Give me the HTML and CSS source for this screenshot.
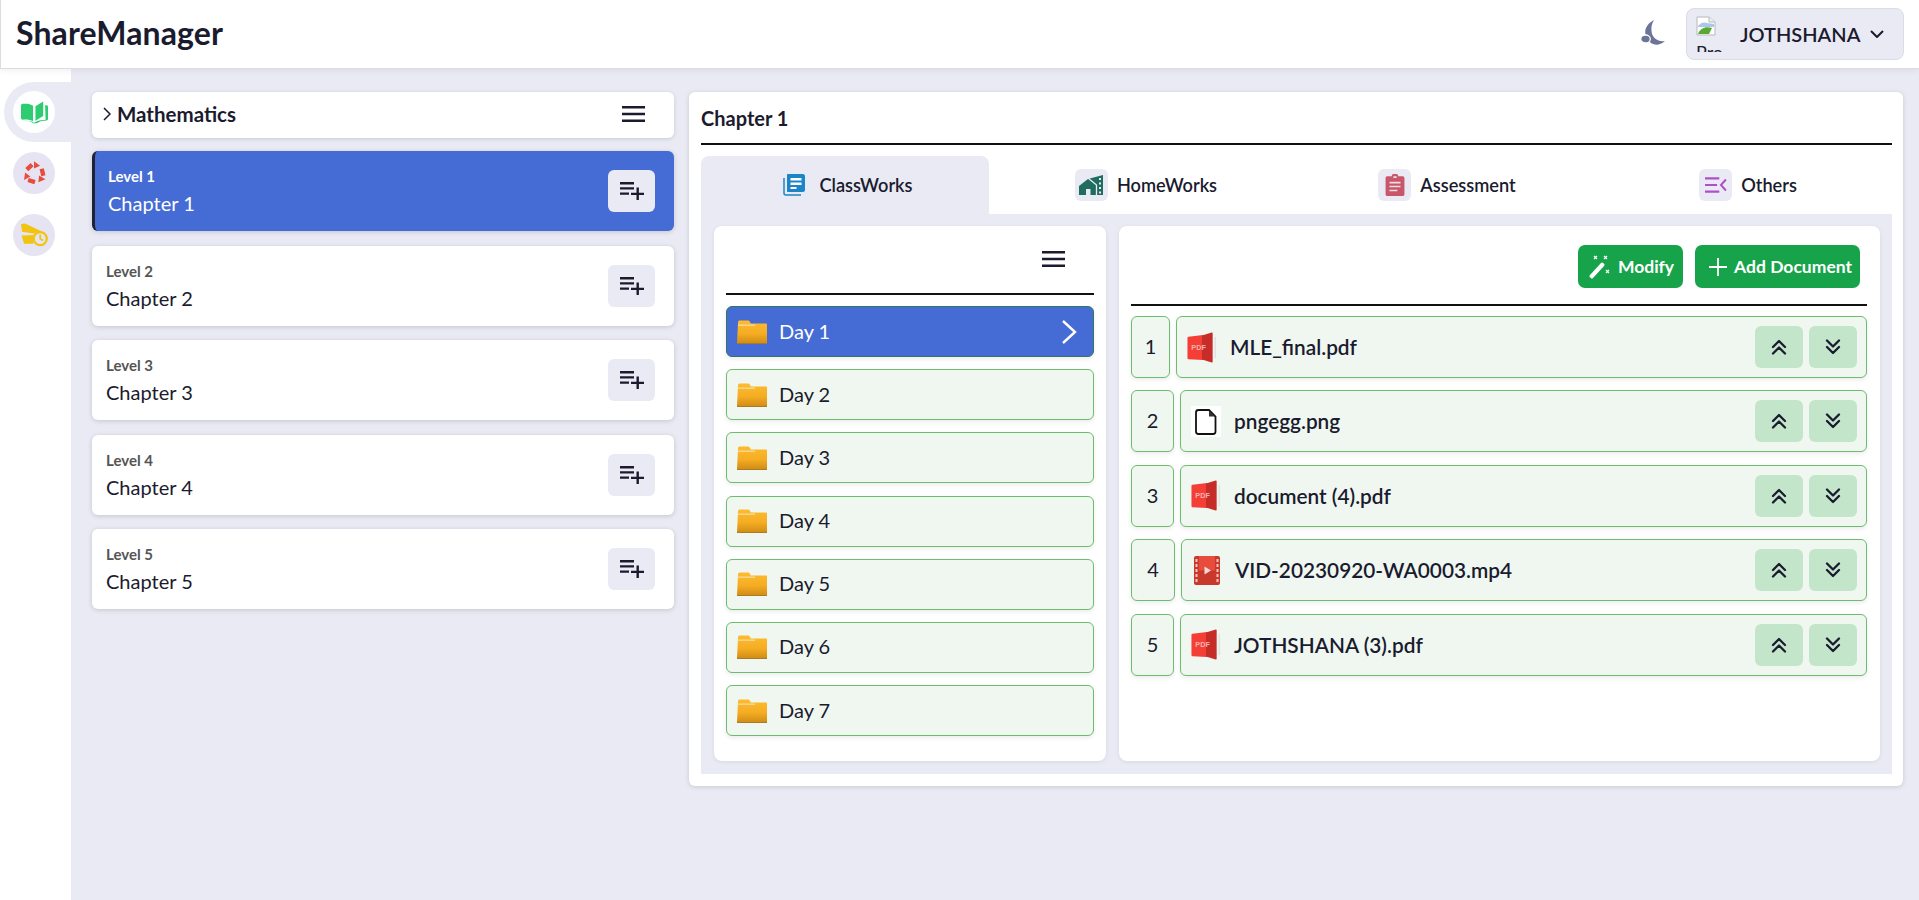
FILE: index.html
```html
<!DOCTYPE html>
<html lang="en">
<head>
<meta charset="UTF-8">
<title>ShareManager</title>
<link rel="stylesheet" href="styles.css">
</head>
<body>

<svg class="defs" xmlns="http://www.w3.org/2000/svg">
  <defs>
    <linearGradient id="folderFill" x1="0" y1="0" x2="0" y2="1">
      <stop offset="0" stop-color="#fdbb2d"/>
      <stop offset="0.55" stop-color="#f5ad24"/>
      <stop offset="1" stop-color="#cf8a12"/>
    </linearGradient>
    <symbol id="ic-menu" viewBox="0 0 23 16">
      <path d="M0 0h23v2.600H0zM0 6.700h23v2.600H0zM0 13.400h23V16H0z" fill="currentColor"/>
    </symbol>
    <symbol id="ic-add" viewBox="0 0 24 18">
      <path d="M0 0h14v2.400H0zM0 5.200h14v2.400H0zM0 10.400h9v2.400H0zM16.500 5.500h2.400v5.200H24v2.400h-5.100V18h-2.400v-4.900H11v-2.400h5.500z" fill="#1a1b2e"/>
    </symbol>
    <symbol id="ic-folder" viewBox="0 0 30 24">
      <path d="M1 2.500C1 1 1.800.500 3 .500h8c1 0 1.500.500 2 1.500l.8 1.500H29c.6 0 1 .4 1 1V23c0 .6-.4 1-1 1H1c-.6 0-1-.4-1-1z" fill="url(#folderFill)"/>
      <path d="M1 4.500h17v1.300H1z" fill="#f4dca0"/>
      <path d="M0 23h30v1H0z" fill="#a87a2c"/>
    </symbol>
    <symbol id="ic-pdf" viewBox="0 0 30 32">
      <path d="M1 5 16 3v26L1 28c-.6-.1-1-.5-1-1V6c0-.5.4-.9 1-1z" fill="#f43f36"/>
      <path d="M15 3.500 25 .5c.6-.2 1 .2 1 .8v29.400c0 .6-.4 1-1 .8L15 28.500z" fill="#c62c28"/>
      <path d="M28 5h1.500v22H28z" fill="#e2e2e2"/>
      <text x="4" y="19" class="pdf-mark">PDF</text>
    </symbol>
    <symbol id="ic-file" viewBox="0 0 30 31">
      <path d="M0 0h30v31H0z" fill="#fff"/>
      <path d="M7.500 4h10.500l6.500 6.500v15c0 1.400-1 2.500-2.500 2.500h-14.500c-1.500 0-2.500-1.100-2.500-2.500v-19c0-1.400 1-2.500 2.500-2.500z" fill="#fff" stroke="#111" stroke-width="1.800"/>
      <path d="M18 4.500v6h6z" fill="#333"/>
    </symbol>
    <symbol id="ic-video" viewBox="0 0 30 31">
      <g transform="translate(2 1)">
        <rect width="26" height="29" rx="2" fill="#c8382b"/>
        <path d="M5 0h16v14.500H5z" fill="#e84c3d"/>
        <path d="M1.500 3h2v3h-2zM1.500 8h2v3h-2zM1.500 13h2v3h-2zM1.500 18h2v3h-2zM1.500 23h2v3h-2zM22.500 3h2v3h-2zM22.500 8h2v3h-2zM22.500 13h2v3h-2zM22.500 18h2v3h-2zM22.500 23h2v3h-2z" fill="#f6c9c3"/>
        <path d="M10.500 10.500l6.500 4-6.500 4z" fill="#f3d9d5"/>
      </g>
    </symbol>
    <symbol id="ic-up" viewBox="0 0 16 16">
      <path d="M2 8l6-6 6 6M2 14.500l6-6 6 6" fill="none" stroke="#1a1b2e" stroke-width="2.300" stroke-linecap="round" stroke-linejoin="round"/>
    </symbol>
    <symbol id="ic-down" viewBox="0 0 16 16">
      <path d="M2 1.500l6 6 6-6M2 8l6 6 6-6" fill="none" stroke="#1a1b2e" stroke-width="2.300" stroke-linecap="round" stroke-linejoin="round"/>
    </symbol>
    <g id="recycle-part">
      <path d="M5 9 10.500 3.800" fill="none" stroke="#e74c3c" stroke-width="4.500"/>
      <path d="M12.500 .2V7.800L18.800 5z" fill="#e74c3c"/>
    </g>
  </defs>
</svg>

<header class="topbar">
  <div class="logo">ShareManager</div>
  <div class="top_right">
    <svg class="moon" viewBox="0 0 24 26">
      <path d="M13 0C5 4 2 12 6 17c2 7 10 11 18 4-6 1-11-2-13-7C10 9 10 5 13 0z" fill="#6c7497"/>
      <ellipse cx="4.500" cy="19" rx="4.800" ry="4" fill="#6c7497" stroke="#fff" stroke-width="1.300"/>
    </svg>
    <div class="profile">
      <div class="avatar">
        <svg class="broken" viewBox="0 0 20 20">
          <path d="M1 1h12l6 5v13H1z" fill="#fff" stroke="#b8b8b8"/>
          <path d="M13 1v5h6" fill="#eee" stroke="#b8b8b8"/>
          <path d="M2 10c3-4 7-4 9-3l7 1v3H2z" fill="#a9c7ec"/>
          <path d="M2 18c2-6 8-8 14-6l-3 6z" fill="#58a834"/>
        </svg>
        <span class="avatar_alt">Pro</span>
      </div>
      <span class="profile_name">JOTHSHANA</span>
      <svg class="caret" viewBox="0 0 14 8"><path d="M1 1l6 6 6-6" fill="none" stroke="#1a1b2e" stroke-width="2"/></svg>
    </div>
  </div>
</header>

<div class="shell">
  <nav class="sidebar">
    <div class="nav_item active">
      <span class="nav_circle">
        <svg class="nav_icon" viewBox="0 0 28 23">
          <path d="M0 4.500C0 3 1 2.500 2 2.500c4-.5 8 0 10.500 2v16C10 19 5 18.500 2 19c-1 0-2-.5-2-2z" fill="#2ecc71"/>
          <path d="M15 5l8-5v15l-8 5z" fill="#2ecc71"/>
          <path d="M25 4h1.500c1 0 1.500.7 1.500 1.500V18c0 1-.5 1.700-1.500 1.700-4 0-7 .6-10 3h-4c-2.500-2-6-2.500-10-2.600 4-.4 8 .3 11 1.900 3-2 8-3 12-3z" fill="#2ecc71"/>
        </svg>
      </span>
    </div>
    <div class="nav_item">
      <span class="nav_circle">
        <svg class="nav_icon" viewBox="0 0 26 26">
          <use href="#recycle-part"/>
          <use href="#recycle-part" transform="rotate(120 13 13)"/>
          <use href="#recycle-part" transform="rotate(240 13 13)"/>
        </svg>
      </span>
    </div>
    <div class="nav_item">
      <span class="nav_circle">
        <svg class="nav_icon" viewBox="0 0 26 24">
          <path d="M0 1 4 .500 22 9l-10 1-11-1.500zM.500 12l11.500-.5V20H3z" fill="#f1c40f"/>
          <circle cx="18.500" cy="15" r="6.300" fill="#e6e4f3" stroke="#f1c40f" stroke-width="2.200"/>
          <path d="M18.500 11v4.200l2.800 1.600" fill="none" stroke="#f1c40f" stroke-width="1.600"/>
        </svg>
      </span>
    </div>
  </nav>

  <main class="content">
    <section class="chapters">
      <div class="subject_card">
        <div class="subject_title">
          <svg class="subject_arrow" viewBox="0 0 8 14"><path d="M1 1l6 6-6 6" fill="none" stroke="#1a1b2e" stroke-width="1.500"/></svg>
          Mathematics
        </div>
        <svg class="menu_icon"><use href="#ic-menu"/></svg>
      </div>

      <div class="chapter_card selected">
        <div><div class="chapter_level">Level 1</div><div class="chapter_name">Chapter 1</div></div>
        <span class="add_btn"><svg class="add_icon"><use href="#ic-add"/></svg></span>
      </div>
      <div class="chapter_card">
        <div><div class="chapter_level">Level 2</div><div class="chapter_name">Chapter 2</div></div>
        <span class="add_btn"><svg class="add_icon"><use href="#ic-add"/></svg></span>
      </div>
      <div class="chapter_card">
        <div><div class="chapter_level">Level 3</div><div class="chapter_name">Chapter 3</div></div>
        <span class="add_btn"><svg class="add_icon"><use href="#ic-add"/></svg></span>
      </div>
      <div class="chapter_card">
        <div><div class="chapter_level">Level 4</div><div class="chapter_name">Chapter 4</div></div>
        <span class="add_btn"><svg class="add_icon"><use href="#ic-add"/></svg></span>
      </div>
      <div class="chapter_card">
        <div><div class="chapter_level">Level 5</div><div class="chapter_name">Chapter 5</div></div>
        <span class="add_btn"><svg class="add_icon"><use href="#ic-add"/></svg></span>
      </div>
    </section>

    <section class="detail">
      <h2 class="detail_title">Chapter 1</h2>

      <div class="tabs">
        <div class="tab active">
          <span class="tab_icon">
            <svg viewBox="0 0 22 22">
              <path d="M5 0h15c1 0 2 1 2 2v14c0 1-1 2-2 2H5c-.6 0-1-.4-1-1V1c0-.6.4-1 1-1z" fill="#1c85c8"/>
              <path d="M7.500 4h11v2.500h-11zM7.500 8.500h11V11h-11zM7.500 13h6v2h-6z" fill="#fff"/>
              <path d="M1 4v15c0 1 1 2 2 2h15" fill="none" stroke="#1c85c8" stroke-width="1.500"/>
            </svg>
          </span>
          ClassWorks
        </div>
        <div class="tab">
          <span class="tab_icon">
            <svg class="home_icon" viewBox="0 0 25 20">
              <path d="M9 4 24 0v20H0v-9z" fill="#1f6d5e"/>
              <path d="M9 3l8.500 7v10" fill="none" stroke="#eaeaf4" stroke-width="1.300"/>
              <path d="M7 14h4.500v6H7zM20 3h2v2h-2zM20 7.500h2v2h-2zM20 12h2v2h-2zM20 16.500h2v2h-2z" fill="#eaeaf4"/>
            </svg>
          </span>
          HomeWorks
        </div>
        <div class="tab">
          <span class="tab_icon">
            <svg viewBox="0 0 24 28">
              <path d="M2 3h6V2c0-1 1-2 2-2h4c1 0 2 1 2 2v1h6c1 0 2 1 2 2v21c0 1-1 2-2 2H2c-1 0-2-1-2-2V5c0-1 1-2 2-2z" fill="#c9576b"/>
              <path d="M10 3h4v2h-4zM5 10h14v2H5zM5 15h14v2H5zM5 20h10v2H5z" fill="#f3dfe3"/>
            </svg>
          </span>
          Assessment
        </div>
        <div class="tab">
          <span class="tab_icon">
            <svg viewBox="0 0 20 14">
              <path d="M0 0h13v2H0zM0 6h11v2H0zM0 12h13v2H0z" fill="#b04fc8"/>
              <path d="M19 2l-4.500 5 4.500 5" fill="none" stroke="#b04fc8" stroke-width="1.800"/>
            </svg>
          </span>
          Others
        </div>
      </div>

      <div class="panel">
        <div class="days">
          <div class="days_head"><svg class="menu_icon"><use href="#ic-menu"/></svg></div>
          <div class="day selected">
            <svg class="folder"><use href="#ic-folder"/></svg>
            <span class="day_name">Day 1</span>
            <svg class="day_arrow" viewBox="0 0 17 26"><path d="M2 2l12 11-12 11" fill="none" stroke="#fff" stroke-width="2.400"/></svg>
          </div>
          <div class="day"><svg class="folder"><use href="#ic-folder"/></svg><span class="day_name">Day 2</span></div>
          <div class="day"><svg class="folder"><use href="#ic-folder"/></svg><span class="day_name">Day 3</span></div>
          <div class="day"><svg class="folder"><use href="#ic-folder"/></svg><span class="day_name">Day 4</span></div>
          <div class="day"><svg class="folder"><use href="#ic-folder"/></svg><span class="day_name">Day 5</span></div>
          <div class="day"><svg class="folder"><use href="#ic-folder"/></svg><span class="day_name">Day 6</span></div>
          <div class="day"><svg class="folder"><use href="#ic-folder"/></svg><span class="day_name">Day 7</span></div>
        </div>

        <div class="files">
          <div class="files_head">
            <span class="green_btn modify">
              <svg class="wand" viewBox="0 0 22 24">
                <path d="M1 20 12 8c.7-.7 1.500-.7 2.200 0l.8.8c.7.700.7 1.500 0 2.200L4 23c-.7.700-1.500.7-2.200 0l-.8-.8c-.7-.6-.7-1.500 0-2.200z" fill="#fff"/>
                <path d="M5 1l3 3M8 1 5 4M15 1l3 3M18 1l-3 3M17 15l3 3M20 15l-3 3" stroke="#fff" stroke-width="1.200"/>
              </svg>
              Modify
            </span>
            <span class="green_btn">
              <svg class="plus" viewBox="0 0 18 18"><path d="M9 0v18M0 9h18" stroke="#fff" stroke-width="1.800"/></svg>
              Add Document
            </span>
          </div>

          <div class="file_row">
            <div class="file_num narrow">1</div>
            <div class="file_box">
              <svg class="file_icon"><use href="#ic-pdf"/></svg>
              <span class="file_name">MLE_final.pdf</span>
              <span class="move_btn"><svg class="move_icon"><use href="#ic-up"/></svg></span>
              <span class="move_btn"><svg class="move_icon"><use href="#ic-down"/></svg></span>
            </div>
          </div>
          <div class="file_row">
            <div class="file_num">2</div>
            <div class="file_box">
              <svg class="file_icon"><use href="#ic-file"/></svg>
              <span class="file_name">pngegg.png</span>
              <span class="move_btn"><svg class="move_icon"><use href="#ic-up"/></svg></span>
              <span class="move_btn"><svg class="move_icon"><use href="#ic-down"/></svg></span>
            </div>
          </div>
          <div class="file_row">
            <div class="file_num">3</div>
            <div class="file_box">
              <svg class="file_icon"><use href="#ic-pdf"/></svg>
              <span class="file_name">document (4).pdf</span>
              <span class="move_btn"><svg class="move_icon"><use href="#ic-up"/></svg></span>
              <span class="move_btn"><svg class="move_icon"><use href="#ic-down"/></svg></span>
            </div>
          </div>
          <div class="file_row">
            <div class="file_num wide">4</div>
            <div class="file_box">
              <svg class="file_icon"><use href="#ic-video"/></svg>
              <span class="file_name">VID-20230920-WA0003.mp4</span>
              <span class="move_btn"><svg class="move_icon"><use href="#ic-up"/></svg></span>
              <span class="move_btn"><svg class="move_icon"><use href="#ic-down"/></svg></span>
            </div>
          </div>
          <div class="file_row">
            <div class="file_num">5</div>
            <div class="file_box">
              <svg class="file_icon"><use href="#ic-pdf"/></svg>
              <span class="file_name">JOTHSHANA (3).pdf</span>
              <span class="move_btn"><svg class="move_icon"><use href="#ic-up"/></svg></span>
              <span class="move_btn"><svg class="move_icon"><use href="#ic-down"/></svg></span>
            </div>
          </div>
        </div>
      </div>
    </section>
  </main>
</div>

</body>
</html>
```

FILE: styles.css
```css
*{margin:0;padding:0;box-sizing:border-box;}
html,body{height:100%;}
body{background:#eaeaf4;color:#1a1b2e;font-family:"Lato","Noto Sans",sans-serif;overflow:hidden;}
.defs{display:block;width:0;height:0;}
.pdf-mark{font-family:"Liberation Sans",sans-serif;font-size:7.500px;font-weight:700;fill:#f6b4ae;}

.topbar{height:69px;background:#fff;border:1px solid #dcdce2;border-top:0;border-right:0;box-shadow:0 2px 6px rgba(0,0,0,.06);display:flex;align-items:center;justify-content:space-between;padding-left:15px;padding-right:15px;position:relative;}
.logo{font-size:32px;font-weight:700;letter-spacing:.1px;padding-bottom:3px;}
.top_right{display:flex;align-items:center;}
.moon{width:24px;height:26px;margin-right:21px;margin-bottom:2px;}
.profile{width:218px;height:52px;background:#eaeaf4;border:1px solid #dcdce6;border-radius:8px;display:flex;align-items:center;padding-left:9px;}
.avatar{width:38px;height:36px;overflow:hidden;flex:none;font-size:18px;line-height:18px;}
.broken{display:block;width:20px;height:20px;}
.avatar_alt{display:block;margin-top:7px;}
.profile_name{font-size:20px;font-weight:600;margin-left:6px;width:130px;}
.caret{width:14px;height:8px;}

.shell{display:flex;height:831px;}
.sidebar{width:71px;background:#fff;padding-top:13px;display:flex;flex-direction:column;}
.nav_item{height:60px;margin-left:4px;display:flex;align-items:center;padding-left:9px;margin-bottom:2px;border-radius:30px 0 0 30px;}
.nav_item.active{background:#eaeaf4;margin-bottom:1px;}
.nav_circle{width:42px;height:42px;border-radius:50%;background:#e6e4f3;display:flex;align-items:center;justify-content:center;}
.nav_item.active .nav_circle{background:#fff;}
.nav_icon{width:27px;height:25px;display:block;}

.content{flex:1;display:flex;gap:15px;padding:23px 16px 0 21px;align-items:flex-start;}
.chapters{width:582px;flex:none;}
.subject_card{height:46px;background:#fff;border-radius:6px;box-shadow:0 1px 4px rgba(0,0,0,.14);display:flex;align-items:center;justify-content:space-between;padding:0 29px 2px 11px;margin-bottom:13px;}
.subject_title{font-size:20.500px;font-weight:700;display:flex;align-items:center;gap:6px;}
.subject_arrow{width:8px;height:14px;}
.menu_icon{width:23px;height:16px;color:#1a1b2e;}

.chapter_card{height:80px;background:#fff;border-radius:6px;box-shadow:0 1px 5px rgba(0,0,0,.16);display:flex;align-items:center;justify-content:space-between;padding:0 19px 0 14px;margin-bottom:14.500px;}
.chapter_card.selected{background:#456bd5;color:#fff;border-left:3px solid #1f2233;padding-left:13px;}
.chapter_level{font-size:15px;font-weight:700;color:#555;line-height:18px;margin-bottom:6px;}
.chapter_card.selected .chapter_level{color:#fff;}
.chapter_name{font-size:20px;line-height:24px;}
.add_btn{width:47px;height:42px;background:#eaeaf4;border-radius:6px;display:flex;align-items:center;justify-content:center;}
.add_icon{width:24px;height:18px;}

.detail{flex:1;height:694px;background:#fff;border-radius:6px;box-shadow:0 1px 5px rgba(0,0,0,.14);padding:0 11px 12px 12px;display:flex;flex-direction:column;}
.detail_title{font-size:20px;font-weight:700;height:53px;line-height:52px;border-bottom:2px solid #111;}
.tabs{display:grid;grid-template-columns:repeat(4,288px);gap:13px;margin-top:11px;height:58px;}
.tab{display:flex;align-items:center;justify-content:center;gap:9px;font-size:18.200px;font-weight:600;border-radius:8px 8px 0 0;}
.tab.active{background:#eaeaf4;}
.tab_icon{width:33px;height:32px;background:#eaeaf4;border-radius:6px;display:flex;align-items:center;justify-content:center;}
.tab_icon svg{width:22px;height:22px;display:block;}
.tab_icon .home_icon{width:25px;height:20px;}

.panel{flex:1;background:#eaeaf4;padding:12px 12px 13px 13px;display:grid;grid-template-columns:392px 1fr;gap:13px;}
.days,.files{background:#fff;border-radius:8px;box-shadow:0 1px 4px rgba(0,0,0,.08);padding:0 12px;}
.days_head{height:69px;border-bottom:2px solid #111;display:flex;align-items:center;justify-content:flex-end;padding-right:29px;margin-bottom:11px;padding-bottom:2px;}
.day{height:51px;background:#f0f7f1;border:1px solid #6cbd6e;border-radius:6px;box-shadow:0 2px 4px rgba(0,0,0,.08);display:flex;align-items:center;padding-left:10px;margin-bottom:12.200px;}
.day.selected{background:#456bd5;color:#fff;border-color:#2e7a60;}
.folder{width:30px;height:24px;flex:none;}
.day_name{font-size:20px;margin-left:12px;flex:1;padding-bottom:2px;}
.day_arrow{width:17px;height:26px;margin-right:15px;}

.files_head{height:80px;border-bottom:2px solid #111;display:flex;align-items:center;justify-content:flex-end;gap:12px;padding:0 7px 0 0;margin-bottom:10px;padding-top:3px;}
.files{padding:0 13px 0 12px;}
.green_btn{height:43px;background:#16a34a;color:#fff;border-radius:7px;display:flex;align-items:center;font-size:17.500px;font-weight:700;padding:0 8px 0 14px;gap:7px;}
.green_btn.modify{padding:0 9px 0 11px;}
.wand{width:22px;height:24px;}
.plus{width:18px;height:18px;}

.file_row{display:flex;gap:6px;margin-bottom:12.400px;}
.file_num{width:43px;height:62px;background:#f0f7f1;border:1px solid #6cbd6e;border-radius:6px;box-shadow:0 2px 4px rgba(0,0,0,.08);display:flex;align-items:center;justify-content:center;font-size:20px;flex:none;padding-bottom:2px;}
.file_num.narrow{width:39px;}
.file_num.wide{width:44px;}
.file_box{flex:1;height:62px;background:#f0f7f1;border:1px solid #6cbd6e;border-radius:6px;box-shadow:0 2px 4px rgba(0,0,0,.08);display:flex;align-items:center;padding:0 9px 0 10px;gap:6px;}
.file_icon{width:30px;height:31px;flex:none;}
.file_name{flex:1;font-size:20.800px;font-weight:600;margin-left:7px;padding-bottom:1px;}
.move_btn{width:48px;height:42px;background:#c3e6cb;border-radius:6px;display:flex;align-items:center;justify-content:center;}
.move_icon{width:16px;height:16px;}
```
